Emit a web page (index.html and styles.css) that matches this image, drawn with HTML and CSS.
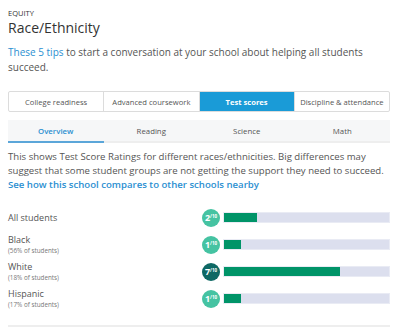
FILE: index.html
```html
<!DOCTYPE html>
<html lang="en">

<head>
    <meta charset="UTF-8">
    <meta name="viewport" content="width=device-width, initial-scale=1.0">
    <title>Race/Ethnicity</title>
    <link rel="stylesheet" href="styles.css">
</head>

<body>
    <div id="container">
        <div class="eyebrow">EQUITY</div>
        <h1>Race/Ethnicity</h1>
        <p class="tips"><a href="#">These 5 tips</a> to start a conversation at your school about helping all students succeed.</p>

        <div class="tabs">
            <div class="tab">College readiness</div>
            <div class="tab">Advanced coursework</div>
            <div class="tab active">Test scores</div>
            <div class="tab">Discipline &amp; attendance</div>
        </div>

        <div class="subtabs">
            <div class="subtab active">Overview</div>
            <div class="subtab">Reading</div>
            <div class="subtab">Science</div>
            <div class="subtab">Math</div>
        </div>

        <p class="desc">This shows Test Score Ratings for different races/ethnicities. Big differences may suggest that some student groups are not getting the support they need to succeed.
            <a href="#">See how this school compares to other schools nearby</a></p>

        <div class="rows">
            <div class="row">
                <div class="label"><div class="name">All students</div></div>
                <div class="badge light">2<span>/10</span></div>
                <div class="bar"><div class="fill" style="width:20%"></div></div>
            </div>
            <div class="row">
                <div class="label"><div class="name">Black</div><div class="sub">(56% of students)</div></div>
                <div class="badge light">1<span>/10</span></div>
                <div class="bar"><div class="fill" style="width:10%"></div></div>
            </div>
            <div class="row">
                <div class="label"><div class="name">White</div><div class="sub">(18% of students)</div></div>
                <div class="badge dark">7<span>/10</span></div>
                <div class="bar"><div class="fill" style="width:70%"></div></div>
            </div>
            <div class="row">
                <div class="label"><div class="name">Hispanic</div><div class="sub">(17% of students)</div></div>
                <div class="badge light">1<span>/10</span></div>
                <div class="bar"><div class="fill" style="width:10%"></div></div>
            </div>
        </div>
        <div class="bottom"></div>
    </div>
</body>

</html>
```

FILE: styles.css
```css
* {
    box-sizing: border-box;
    margin: 0;
    padding: 0;
}

body {
    font-family: "Open Sans", "Noto Sans", sans-serif;
    color: #555;
    background: #fff;
}

#container {
    width: 382px;
    margin-left: 8px;
    padding-top: 8px;
}

a {
    color: #2b8fd1;
    text-decoration: none;
}

.eyebrow {
    font-size: 7.5px;
    line-height: 10px;
    color: #333;
}

h1 {
    font-size: 14px;
    line-height: 20px;
    font-weight: normal;
    color: #333;
}

.tips {
    margin-top: 7px;
    font-size: 10px;
    line-height: 15px;
}

.tabs {
    display: flex;
    margin-top: 16px;
    height: 21px;
    border: 1px solid #dcdcdc;
    border-radius: 2px;
}

.tab {
    flex: 1;
    display: flex;
    align-items: center;
    justify-content: center;
    font-size: 7.6px;
    color: #555;
    border-right: 1px solid #dcdcdc;
}

.tab:last-child {
    border-right: none;
}

.tab.active {
    background: #1a9bd7;
    color: #fff;
    font-weight: bold;
}

.subtabs {
    display: flex;
    margin-top: 8px;
    height: 23px;
    background: #f6f7f8;
}

.subtab {
    flex: 1;
    display: flex;
    align-items: center;
    justify-content: center;
    font-size: 7.8px;
    color: #555;
    border-bottom: 2px solid #eeeeee;
}

.subtab.active {
    color: #2b8fd1;
    font-weight: 600;
    border-bottom: 2px solid #5ba6d9;
}

.desc {
    margin-top: 7px;
    font-size: 9.6px;
    line-height: 14px;
}

.desc a {
    display: block;
    font-weight: 600;
}

.rows {
    margin-top: 12px;
}

.row {
    display: flex;
    align-items: center;
    height: 27px;
}

.label {
    width: 194px;
}

.name {
    font-size: 9px;
    line-height: 12px;
}

.sub {
    font-size: 6.3px;
    line-height: 9px;
    color: #777;
}

.badge {
    width: 18px;
    height: 18px;
    border-radius: 50%;
    display: flex;
    align-items: center;
    justify-content: center;
    color: #fff;
    font-weight: bold;
    font-size: 9px;
    margin-right: 3px;
}

.badge span {
    font-size: 4.5px;
    margin-top: -3px;
}

.badge.light {
    background: #45c3a2;
}

.badge.dark {
    background: #0e6864;
}

.bar {
    width: 167px;
    height: 11px;
    background: #dcdfee;
    border: 1px solid #e9ebf4;
}

.fill {
    height: 100%;
    background: #009468;
}

.bottom {
    margin-top: 13px;
    border-top: 2px solid #eeeeee;
}
```
